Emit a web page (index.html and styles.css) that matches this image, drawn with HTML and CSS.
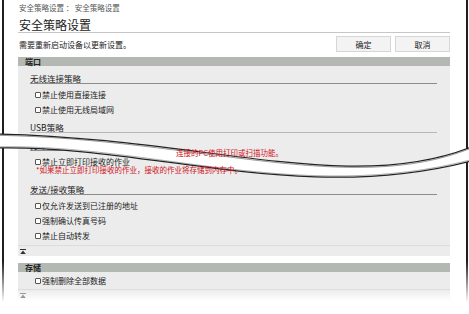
FILE: index.html
```html
<!DOCTYPE html>
<html lang="zh-CN">
<head>
<meta charset="utf-8">
<title>安全策略设置</title>
<link rel="stylesheet" href="styles.css">
</head>
<body>
<div class="page">
  <div class="frame">
    <div class="crumb">安全策略设置 ： 安全策略设置</div>
    <h1 class="title">安全策略设置</h1>
    <div class="toolbar">
      <span class="notice">需要重新启动设备以更新设置。</span>
      <button class="btn">确定</button>
      <button class="btn">取消</button>
    </div>

    <div class="piece-top">
      <div class="bar">端口</div>
      <div class="panel panel-top">
        <div class="group g-wireless">无线连接策略</div>
        <div class="rows">
          <div class="row"><span class="box"></span>禁止使用直接连接</div>
          <div class="row"><span class="box"></span>禁止使用无线局域网</div>
        </div>
        <div class="group g-usb">USB策略</div>
      </div>
    </div>

    <div class="piece-bottom">
      <div class="panel">
        <div class="group g-print">打印策略</div>
        <div class="row row-print"><span class="box"></span>禁止立即打印接收的作业</div>
        <p class="note">*如果禁止立即打印接收的作业，接收的作业将存储到内存中。</p>
        <div class="group g-send">发送/接收策略</div>
        <div class="rows rows-send">
          <div class="row"><span class="box"></span>仅允许发送到已注册的地址</div>
          <div class="row"><span class="box"></span>强制确认传真号码</div>
          <div class="row"><span class="box"></span>禁止自动转发</div>
        </div>
        <div class="totop">
          <svg width="6" height="5" viewBox="0 0 6 5"><rect width="6" height="1"/><path d="M3 1.6 L5.8 5 H0.2 Z"/></svg>
        </div>
      </div>

      <div class="bar bar-store">存储</div>
      <div class="panel">
        <div class="rows rows-store">
          <div class="row"><span class="box"></span>强制删除全部数据</div>
        </div>
        <div class="totop totop-fade">
          <svg width="6" height="5" viewBox="0 0 6 5"><rect width="6" height="1"/><path d="M3 1.6 L5.8 5 H0.2 Z"/></svg>
        </div>
      </div>
    </div>
  </div>

  <svg class="tear" width="469" height="200" viewBox="0 0 469 200">
    <path d="M-2,134 C200,138 350,195 471,147 L471,161 C300,205 150,145 -2,148 Z" fill="#fff"/>
    <path d="M-2,135.3 C200,139.3 350,196.3 471,148.3" fill="none" stroke="#9a9a9a" stroke-width="1"/>
    <path d="M-2,146.8 C150,143.8 300,203.8 471,159.8" fill="none" stroke="#b0b0b0" stroke-width="1"/>
    <path d="M-2,134 C200,138 350,195 471,147" fill="none" stroke="#222" stroke-width="1.2"/>
    <path d="M-2,148 C150,145 300,205 471,161" fill="none" stroke="#222" stroke-width="1.2"/>
  </svg>
  <span class="tear-note">连接的PC使用打印或扫描功能。</span>
</div>
</body>
</html>
```

FILE: styles.css
```css
html, body {
  margin: 0;
  background: #fff;
  overflow: hidden;
}

body {
  font-family: "Noto Sans CJK SC", "Noto Sans", "Liberation Sans", sans-serif;
  color: #222;
}

.page {
  position: relative;
  width: 469px;
  height: 314px;
  overflow: hidden;
}

.frame {
  margin-left: 2px;
  width: 466px;
  height: 314px;
  box-sizing: border-box;
  padding: 0 16px 0 14px;
  border-style: solid;
  border-width: 0 2px;
  border-image: linear-gradient(to bottom, #1e1e1e 0%, #1e1e1e 83%, rgba(30, 30, 30, 0) 96%) 1;
}

.crumb {
  height: 16px;
  line-height: 16px;
  font-size: 7.5px;
  color: #555;
  padding-left: 1px;
}

.title {
  margin: 0;
  height: 16px;
  line-height: 18px;
  font-size: 12px;
  font-weight: normal;
  color: #222;
  border-bottom: 1px solid #c6c6c6;
  padding-left: 1px;
}

.toolbar {
  display: flex;
  align-items: center;
  gap: 4px;
  margin-top: 3px;
  height: 16px;
}

.notice {
  flex: 1;
  font-size: 8px;
  color: #222;
  padding-left: 1px;
}

.btn {
  width: 55px;
  height: 16px;
  padding: 0;
  border: 1px solid #d6d6d6;
  background: #f3f3f3;
  font-family: "Noto Sans CJK SC", "Noto Sans", sans-serif;
  font-size: 8px;
  color: #222;
}

.piece-top {
  position: relative;
  z-index: 1;
  margin-top: 5px;
  clip-path: path("M-20,-60 L453,-60 L453,90 C332,138 182,81 -20,77 Z");
}

.piece-bottom {
  margin-top: -32px;
}

.bar {
  height: 9px;
  line-height: 9px;
  background: #b3b9b2;
  font-size: 8px;
  font-weight: bold;
  color: #222;
  padding-left: 7px;
}

.bar-store {
  margin-top: 7px;
}

.panel {
  background: #ececec;
}

.panel-top {
  height: 106px;
}

.group {
  margin: 0 13px 0 12px;
  line-height: 10px;
  font-size: 8.5px;
  color: #222;
  border-bottom: 1px solid #8c8c8c;
}

.g-wireless {
  padding-top: 7px;
}

.g-usb {
  padding-top: 5px;
  border-bottom-color: #b8b8b8;
}

.g-send {
  padding-top: 11px;
}

.rows {
  padding-top: 3px;
}

.rows-send {
  padding-bottom: 2px;
}

.rows-store {
  padding: 1px 0;
}

.row {
  display: flex;
  align-items: center;
  gap: 1px;
  height: 15px;
  margin-left: 17px;
  font-size: 8px;
  color: #222;
}

.row-print {
  margin-top: 6px;
  height: 9px;
  line-height: 9px;
}

.box {
  width: 6px;
  height: 6px;
  box-sizing: border-box;
  border: 1px solid #555;
  border-radius: 1px;
  background: #fff;
}

.note {
  position: relative;
  z-index: 3;
  margin: 0 0 0 18px;
  font-size: 7.5px;
  line-height: 7px;
  color: #d0101b;
}

.totop {
  display: flex;
  align-items: center;
  height: 10px;
  padding-left: 2px;
  border-top: 1px solid #dcdcdc;
  fill: #333;
}

.totop-fade {
  height: 11px;
  background: linear-gradient(to bottom, #ececec, #ffffff);
  fill: #999;
}

.tear {
  position: absolute;
  left: 0;
  top: 0;
  z-index: 2;
}

.tear-note {
  position: absolute;
  left: 176px;
  top: 148px;
  z-index: 3;
  font-size: 7.5px;
  line-height: 9px;
  color: #d0101b;
  white-space: nowrap;
}
```
